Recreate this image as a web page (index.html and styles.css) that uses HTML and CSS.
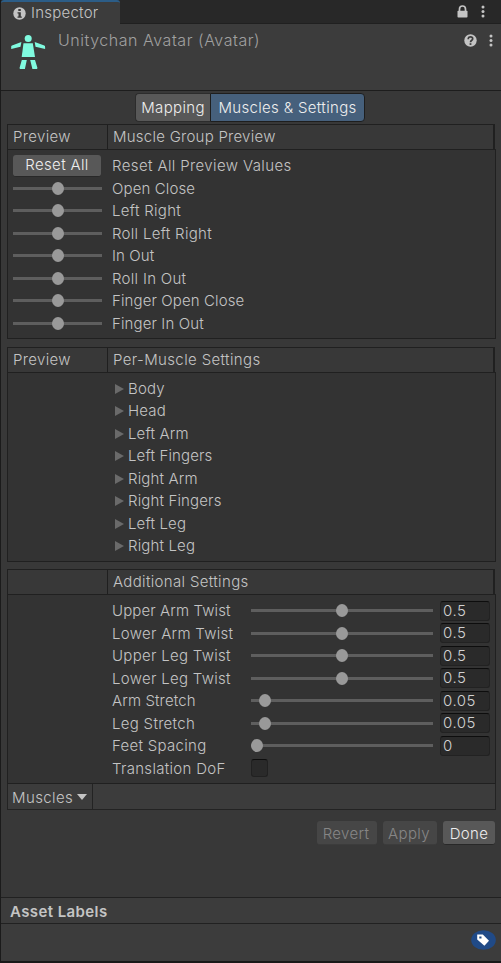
FILE: index.html
```html
<!DOCTYPE html>
<html lang="en">
<head>
<meta charset="utf-8">
<title>Inspector</title>
<link rel="stylesheet" href="styles.css">
</head>
<body>
<div class="window">
  <div class="tabbar">
    <div class="tab">
      <svg class="info" width="13" height="13" viewBox="0 0 13 13"><circle cx="6.5" cy="6.5" r="6.2" fill="#c4c4c4"/><path d="M5.3 2h2.5v2H5.3zM4.5 5.2h3.3v4.2h1v1.3H4.5V9.400h1V6.500h-1z" fill="#383838"/></svg>
      <span>Inspector</span>
    </div>
    <svg class="lock" width="11" height="13" viewBox="0 0 11 13"><path d="M2.500 6V4a3 3 0 0 1 6 0v2" fill="none" stroke="#c4c4c4" stroke-width="1.700"/><rect x=".5" y="5.700" width="10" height="6.800" rx=".8" fill="#c4c4c4"/></svg>
    <svg class="dots-top" width="4" height="13" viewBox="0 0 4 13" fill="#c4c4c4"><circle cx="2" cy="2" r="1.500"/><circle cx="2" cy="6.500" r="1.500"/><circle cx="2" cy="11" r="1.500"/></svg>
  </div>
  <header class="header">
    <svg class="avatar" width="36" height="36" viewBox="0 0 36 36" fill="#80fadf"><circle cx="18.200" cy="4.600" r="3.500"/><path d="M13.500 9.300h9.300l2.200 13.600H11.700z"/><path d="M11.400 8 2 11.600a1 1 0 0 0-.8 1.200v2.200l9.300-2.200zM24.700 8l9.600 3.600q.8.400.8 1.200v2.200l-9.600-2.200zM11.800 26h5l-1.900 9h-4.600q-1-.2-.7-1.200zM20.200 26h4.800l2.400 7.800q.2 1-.7 1.200h-4.300z"/></svg>
    <h1>Unitychan Avatar (Avatar)</h1>
    <svg class="help" width="13" height="13" viewBox="0 0 13 13"><circle cx="6.500" cy="6.500" r="6.200" fill="#c4c4c4"/><path d="M4.300 5.200V4.600C4.300 2.200 8.700 2.200 8.700 4.700 8.700 6.300 6.500 6.200 6.500 8.300" fill="none" stroke="#3c3c3c" stroke-width="1.700"/><rect x="5.600" y="9.200" width="1.800" height="1.700" fill="#3c3c3c"/></svg>
    <svg class="dots" width="4" height="13" viewBox="0 0 4 13" fill="#c4c4c4"><circle cx="2" cy="2" r="1.500"/><circle cx="2" cy="6.500" r="1.500"/><circle cx="2" cy="11" r="1.500"/></svg>
  </header>
  <nav class="modes"><button class="mode">Mapping</button><button class="mode selected">Muscles &amp; Settings</button></nav>

  <section class="panel">
    <div class="head"><span class="c1">Preview</span><span class="title">Muscle Group Preview</span></div>
    <div class="rows">
      <div class="row"><button class="btn reset">Reset All</button><span class="wide">Reset All Preview Values</span></div>
      <div class="row"><i class="slider mid"><b></b></i><span class="tight">Open Close</span></div>
      <div class="row"><i class="slider mid"><b></b></i><span>Left Right</span></div>
      <div class="row"><i class="slider mid"><b></b></i><span>Roll Left Right</span></div>
      <div class="row"><i class="slider mid"><b></b></i><span class="tight">In Out</span></div>
      <div class="row"><i class="slider mid"><b></b></i><span>Roll In Out</span></div>
      <div class="row"><i class="slider mid"><b></b></i><span class="tight">Finger Open Close</span></div>
      <div class="row"><i class="slider mid"><b></b></i><span class="tight">Finger In Out</span></div>
    </div>
  </section>

  <section class="panel">
    <div class="head"><span class="c1">Preview</span><span class="wide">Per-Muscle Settings</span></div>
    <div class="rows tree">
      <div class="row"><i class="arrow"></i><span>Body</span></div>
      <div class="row"><i class="arrow"></i><span>Head</span></div>
      <div class="row"><i class="arrow"></i><span>Left Arm</span></div>
      <div class="row"><i class="arrow"></i><span>Left Fingers</span></div>
      <div class="row"><i class="arrow"></i><span>Right Arm</span></div>
      <div class="row"><i class="arrow"></i><span>Right Fingers</span></div>
      <div class="row"><i class="arrow"></i><span>Left Leg</span></div>
      <div class="row"><i class="arrow"></i><span>Right Leg</span></div>
    </div>
  </section>

  <section class="panel last">
    <div class="head"><span class="c1"></span><span>Additional Settings</span></div>
    <div class="rows settings">
      <div class="row"><span class="tight">Upper Arm Twist</span><i class="slider mid"><b></b></i><em>0.5</em></div>
      <div class="row"><span>Lower Arm Twist</span><i class="slider mid"><b></b></i><em>0.5</em></div>
      <div class="row"><span>Upper Leg Twist</span><i class="slider mid"><b></b></i><em>0.5</em></div>
      <div class="row"><span>Lower Leg Twist</span><i class="slider mid"><b></b></i><em>0.5</em></div>
      <div class="row"><span class="tight">Arm Stretch</span><i class="slider low"><b></b></i><em>0.05</em></div>
      <div class="row"><span>Leg Stretch</span><i class="slider low"><b></b></i><em>0.05</em></div>
      <div class="row"><span>Feet Spacing</span><i class="slider"><b></b></i><em>0</em></div>
      <div class="row"><span>Translation DoF</span><i class="check"></i></div>
    </div>
    <div class="foot"><div class="drop">Muscles<i></i></div></div>
  </section>

  <div class="actions"><button class="btn off revert">Revert</button><button class="btn off apply">Apply</button><button class="btn done">Done</button></div>
  <div class="labels-title">Asset Labels</div>
  <div class="labels">
    <svg width="25" height="20" viewBox="0 0 25 20"><ellipse cx="12.500" cy="10" rx="12.300" ry="9.800" fill="#204a87"/><path fill-rule="evenodd" d="M6.200 4.600h5.600l6.200 6.200-4.600 5-7.200-6.400zM8.300 6.500v2h2.200v-2z" fill="#fff"/></svg>
  </div>
</div>
</body>
</html>
```
FILE: styles.css
```css
* { box-sizing: border-box; }
body { margin: 0; background: #191919; color: #c4c4c4; font: 350 15px/20px Inter, sans-serif; letter-spacing: .34px; white-space: nowrap; }
button { font: inherit; letter-spacing: inherit; color: #eee; padding: 0; border: 0; }
svg { display: block; flex: none; }
.window { width: 501px; height: 961px; border-left: 1px solid #1b1b1b; background: #383838; display: flex; flex-direction: column; overflow: hidden; }

.tabbar { height: 24px; flex: none; display: flex; background: linear-gradient(#282828 23px, #202020 23px); }
.tab { width: 119px; height: 24px; background: #3c3c3c; border-top: 2px solid #2c5d87; border-radius: 3px 3px 0 0; display: flex; padding-left: 12px; }
.info { margin: 5px 5px 0 0; }
.tab span { line-height: 22px; letter-spacing: .25px; }
.lock { margin: 5px 0 0 337px; }
.dots-top { margin: 5px 0 0 13px; }

.header { height: 67px; flex: none; display: flex; background: #3c3c3c; border-bottom: 1px solid #1d1d1d; }
.avatar { margin: 10px 0 0 9px; }
h1 { flex: 1; margin: 6px 0 0 12px; font-size: 16px; font-weight: 350; color: #a0a0a0; letter-spacing: .54px; }
.help { margin: 10px 0 0 0; }
.dots { margin: 10px 8px 0 12px; }

.modes { display: flex; margin: 2px 0 0 134px; height: 29px; flex: none; }
.mode { height: 29px; width: 75px; background: #585858; border: 1px solid #2c2c2c; border-right: 0; border-radius: 4px 0 0 4px; }
.mode.selected { width: 155px; background: #46607c; border: 1px solid #1e1e1e; border-radius: 0 4px 4px 0; }

.panel { margin: 2px 5px 0 6px; height: 215px; flex: none; }
.panel + .panel { margin-top: 8px; }
.panel + .panel.last { height: 241px; margin-top: 7px; }
.head { display: flex; height: 25px; margin-right: 1px; background: #383838; border: 1px solid #202020; border-width: 1px 2px 0 1px; line-height: 23px; }
.head .c1 { width: 100px; border-right: 1px solid #1f1f1f; padding-left: 5px; }
.head span + span { padding-left: 5px; }
.head .title { letter-spacing: .25px; }
.rows { height: 190px; background: #333; border: 1px solid #202020; padding: 5px 0 0 5px; }
.row { height: 22.500px; display: flex; align-items: center; }
.row span { letter-spacing: .3px; }
.row .tight { letter-spacing: .12px; }
.head .wide, .row .wide { letter-spacing: .38px; }
.btn { background: #585858; border-radius: 3px; border-bottom: 1px solid #282828; }
.reset { width: 88px; height: 22px; line-height: 20px; margin: 0 11px 1px 0; }
.slider { width: 89px; height: 13px; flex: none; display: flex; align-items: center; background: linear-gradient(#5e5e5e, #5e5e5e) 0 5px / 100% 3px no-repeat; margin: 0 10px 1px 0; }
.slider b { width: 12px; height: 13px; border-radius: 50%; background: #999; }
.slider.mid { justify-content: center; }
.slider.low { padding-left: 8px; }
.tree { padding: 4.500px 0 0 107px; }
.tree .row span { letter-spacing: .15px; }
.arrow { border: 5.500px solid transparent; border-width: 5.500px 0 5.500px 9px; border-left-color: #6a6a6a; margin-right: 4px; }
.settings { padding-left: 104px; }
.settings span { width: 139px; }
.settings .slider { width: 182px; margin-right: 7px; }
em { width: 50px; height: 20px; margin-bottom: 1px; font-style: normal; line-height: 17px; color: #d2d2d2; background: #2a2a2a; border: 1px solid #222; border-top-color: #0d0d0d; border-radius: 3px; padding-left: 2px; letter-spacing: .5px; }
.check { width: 17px; height: 18px; margin-bottom: 1px; background: #2a2a2a; border: 1px solid #212121; border-top-color: #0d0d0d; border-radius: 3px; }
.foot { height: 26px; background: #3c3c3c; border: 1px solid #232323; border-top: 0; }
.drop { width: 85px; height: 25px; padding-left: 4px; line-height: 27px; border-right: 1px solid #232323; display: flex; letter-spacing: .4px; }
.drop i { margin: 10px 0 0 4px; border: 5px solid transparent; border-width: 6px 5px 0; border-top-color: #c4c4c4; height: 0; }

.actions { display: flex; justify-content: flex-end; gap: 6px; margin: 11px 6px 0 0; height: 24px; flex: none; }
.actions .btn { line-height: 25px; }
.actions .off { background: #464646; color: #868686; border-bottom-color: #3c3c3c; padding-right: 2px; }
.revert { width: 60px; }
.apply { width: 54px; }
.done { width: 52px; }
.labels-title { margin-top: 52px; height: 27px; flex: none; background: #3c3c3c; border: 1px solid #212121; border-width: 1px 0; padding: 4px 0 0 9px; font-weight: 600; letter-spacing: .4px; }
.labels { flex: 1; background: #3c3c3c; display: flex; justify-content: flex-end; padding: 6px 5px 0 0; }
```
